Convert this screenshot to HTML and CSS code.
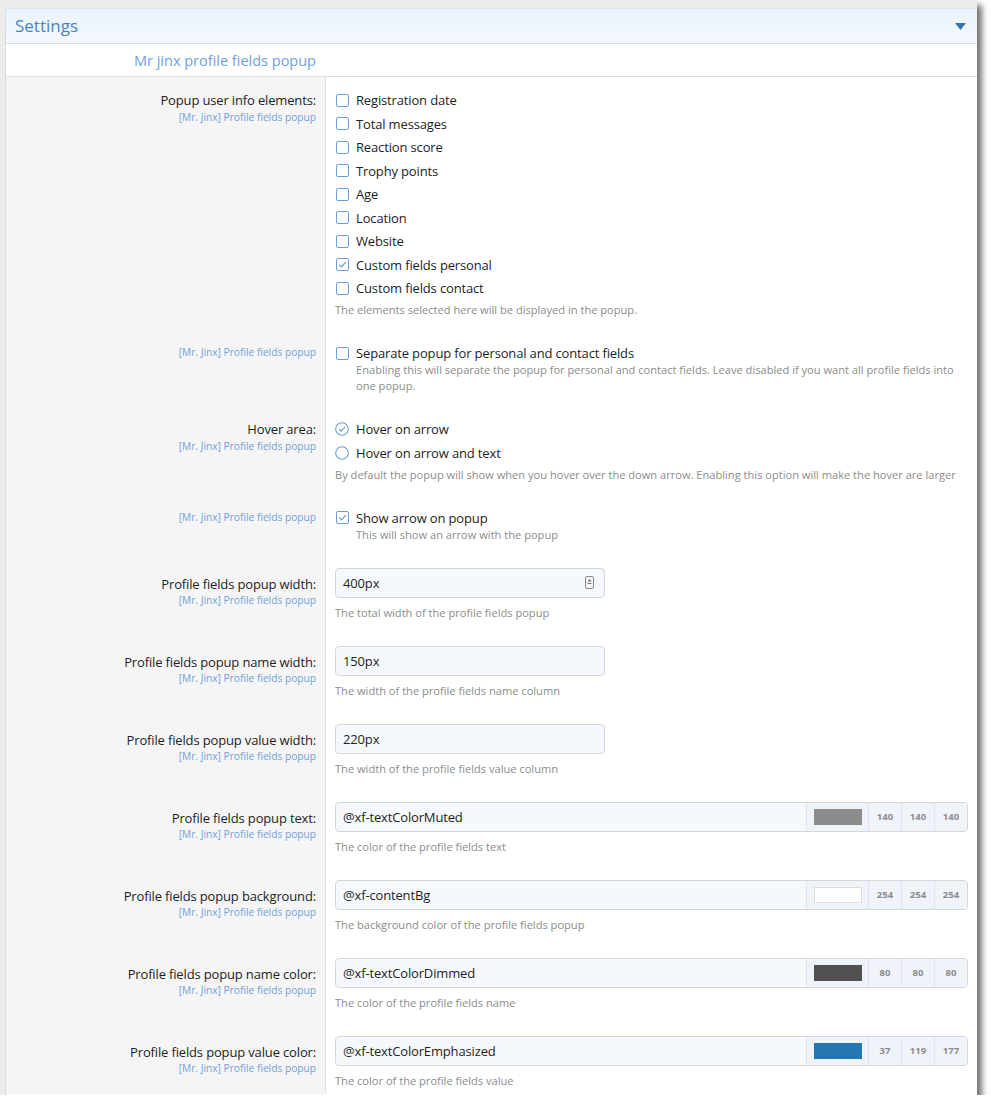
FILE: index.html
```html
<!DOCTYPE html>
<html>
<head>
<meta charset="utf-8">
<link rel="stylesheet" href="styles.css">
</head>
<body>
<div class="shot">
  <div class="panel">
    <div class="header">
      <span class="title">Settings</span>
      <svg class="caret" width="11" height="7" viewBox="0 0 11 7"><path d="M0 0h11L5.5 7z" fill="#3b72aa"/></svg>
    </div>
    <div class="subheader"><div class="subtitle">Mr jinx profile fields popup</div></div>

    <div class="rows">
      <div class="row check">
        <div class="dt"><div class="label">Popup user info elements:</div><div class="hint">[Mr. Jinx] Profile fields popup</div></div>
        <div class="dd">
          <div class="choices">
            <div class="choice"><span class="box"><svg width="13" height="13"><rect x=".5" y=".5" width="12" height="12" rx="1.5" fill="#fff" stroke="#6c9ed9"/></svg></span><span class="ctext">Registration date</span></div>
            <div class="choice"><span class="box"><svg width="13" height="13"><rect x=".5" y=".5" width="12" height="12" rx="1.5" fill="#fff" stroke="#6c9ed9"/></svg></span><span class="ctext">Total messages</span></div>
            <div class="choice"><span class="box"><svg width="13" height="13"><rect x=".5" y=".5" width="12" height="12" rx="1.5" fill="#fff" stroke="#6c9ed9"/></svg></span><span class="ctext">Reaction score</span></div>
            <div class="choice"><span class="box"><svg width="13" height="13"><rect x=".5" y=".5" width="12" height="12" rx="1.5" fill="#fff" stroke="#6c9ed9"/></svg></span><span class="ctext">Trophy points</span></div>
            <div class="choice"><span class="box"><svg width="13" height="13"><rect x=".5" y=".5" width="12" height="12" rx="1.5" fill="#fff" stroke="#6c9ed9"/></svg></span><span class="ctext">Age</span></div>
            <div class="choice"><span class="box"><svg width="13" height="13"><rect x=".5" y=".5" width="12" height="12" rx="1.5" fill="#fff" stroke="#6c9ed9"/></svg></span><span class="ctext">Location</span></div>
            <div class="choice"><span class="box"><svg width="13" height="13"><rect x=".5" y=".5" width="12" height="12" rx="1.5" fill="#fff" stroke="#6c9ed9"/></svg></span><span class="ctext">Website</span></div>
            <div class="choice"><span class="box"><svg width="13" height="13"><rect x=".5" y=".5" width="12" height="12" rx="1.5" fill="#fff" stroke="#6c9ed9"/><path d="M3.2 6.6l2.3 2.3 4.4-4.8" fill="none" stroke="#6c9ed9" stroke-width="1.3"/></svg></span><span class="ctext">Custom fields personal</span></div>
            <div class="choice"><span class="box"><svg width="13" height="13"><rect x=".5" y=".5" width="12" height="12" rx="1.5" fill="#fff" stroke="#6c9ed9"/></svg></span><span class="ctext">Custom fields contact</span></div>
          </div>
          <div class="explain">The elements selected here will be displayed in the popup.</div>
        </div>
      </div>

      <div class="row check">
        <div class="dt"><div class="hint">[Mr. Jinx] Profile fields popup</div></div>
        <div class="dd">
          <div class="choice"><span class="box"><svg width="13" height="13"><rect x=".5" y=".5" width="12" height="12" rx="1.5" fill="#fff" stroke="#6c9ed9"/></svg></span><span class="ctext">Separate popup for personal and contact fields<span class="cexplain">Enabling this will separate the popup for personal and contact fields. Leave disabled if you want all profile fields into one popup.</span></span></div>
        </div>
      </div>

      <div class="row check">
        <div class="dt"><div class="label">Hover area:</div><div class="hint">[Mr. Jinx] Profile fields popup</div></div>
        <div class="dd">
          <div class="choices">
            <div class="choice"><span class="box"><svg width="14" height="14"><circle cx="7" cy="7" r="6.3" fill="#fff" stroke="#6c9ed9" stroke-width="1.1"/><path d="M4.2 7.1l2 2 3.8-4" fill="none" stroke="#6c9ed9" stroke-width="1.2"/></svg></span><span class="ctext">Hover on arrow</span></div>
            <div class="choice"><span class="box"><svg width="14" height="14"><circle cx="7" cy="7" r="6.3" fill="#fff" stroke="#6c9ed9" stroke-width="1.1"/></svg></span><span class="ctext">Hover on arrow and text</span></div>
          </div>
          <div class="explain">By default the popup will show when you hover over the down arrow. Enabling this option will make the hover are larger</div>
        </div>
      </div>

      <div class="row check">
        <div class="dt"><div class="hint">[Mr. Jinx] Profile fields popup</div></div>
        <div class="dd">
          <div class="choice"><span class="box"><svg width="13" height="13"><rect x=".5" y=".5" width="12" height="12" rx="1.5" fill="#fff" stroke="#6c9ed9"/><path d="M3.2 6.6l2.3 2.3 4.4-4.8" fill="none" stroke="#6c9ed9" stroke-width="1.3"/></svg></span><span class="ctext">Show arrow on popup<span class="cexplain">This will show an arrow with the popup</span></span></div>
        </div>
      </div>

      <div class="row input">
        <div class="dt"><div class="label">Profile fields popup width:</div><div class="hint">[Mr. Jinx] Profile fields popup</div></div>
        <div class="dd">
          <div class="field short"><span class="val">400px</span><svg class="spin" width="9" height="13" viewBox="0 0 9 13"><rect x=".5" y=".5" width="8" height="12" rx="1.5" fill="#f4f4f4" stroke="#8a8a8a"/><path d="M4.5 3L6.5 5.6H2.5z" fill="#777"/><path d="M2.5 7.5h4" stroke="#777" stroke-width="1"/></svg></div>
          <div class="explain">The total width of the profile fields popup</div>
        </div>
      </div>

      <div class="row input">
        <div class="dt"><div class="label">Profile fields popup name width:</div><div class="hint">[Mr. Jinx] Profile fields popup</div></div>
        <div class="dd">
          <div class="field short"><span class="val">150px</span></div>
          <div class="explain">The width of the profile fields name column</div>
        </div>
      </div>

      <div class="row input">
        <div class="dt"><div class="label">Profile fields popup value width:</div><div class="hint">[Mr. Jinx] Profile fields popup</div></div>
        <div class="dd">
          <div class="field short"><span class="val">220px</span></div>
          <div class="explain">The width of the profile fields value column</div>
        </div>
      </div>

      <div class="row input">
        <div class="dt"><div class="label">Profile fields popup text:</div><div class="hint">[Mr. Jinx] Profile fields popup</div></div>
        <div class="dd">
          <div class="field color"><span class="val">@xf-textColorMuted</span><span class="swatchbox"><span class="swatch c-muted"></span></span><span class="rgb">140</span><span class="rgb">140</span><span class="rgb">140</span></div>
          <div class="explain">The color of the profile fields text</div>
        </div>
      </div>

      <div class="row input">
        <div class="dt"><div class="label">Profile fields popup background:</div><div class="hint">[Mr. Jinx] Profile fields popup</div></div>
        <div class="dd">
          <div class="field color"><span class="val">@xf-contentBg</span><span class="swatchbox"><span class="swatch c-bg"></span></span><span class="rgb">254</span><span class="rgb">254</span><span class="rgb">254</span></div>
          <div class="explain">The background color of the profile fields popup</div>
        </div>
      </div>

      <div class="row input">
        <div class="dt"><div class="label">Profile fields popup name color:</div><div class="hint">[Mr. Jinx] Profile fields popup</div></div>
        <div class="dd">
          <div class="field color"><span class="val">@xf-textColorDimmed</span><span class="swatchbox"><span class="swatch c-dim"></span></span><span class="rgb">80</span><span class="rgb">80</span><span class="rgb">80</span></div>
          <div class="explain">The color of the profile fields name</div>
        </div>
      </div>

      <div class="row input last">
        <div class="dt"><div class="label">Profile fields popup value color:</div><div class="hint">[Mr. Jinx] Profile fields popup</div></div>
        <div class="dd">
          <div class="field color"><span class="val">@xf-textColorEmphasized</span><span class="swatchbox"><span class="swatch c-emph"></span></span><span class="rgb">37</span><span class="rgb">119</span><span class="rgb">177</span></div>
          <div class="explain">The color of the profile fields value</div>
        </div>
      </div>
    </div>
  </div>
</div>
</body>
</html>
```
FILE: styles.css
```css
body {
  margin: 0;
  background: #fff;
  font-family: "Open Sans", "Noto Sans", sans-serif;
  color: #1e1e1e;
}
.shot {
  width: 977px;
  height: 1095px;
  box-sizing: border-box;
  background: #ececec;
  padding: 8px 0 0 5px;
  box-shadow: 5px 5px 6px rgba(0, 0, 0, 0.55);
  overflow: hidden;
}
.panel {
  height: 100%;
  background: #fff;
  border-left: 1px solid #dcdcdc;
  border-top: 1px solid #dde6f0;
  overflow: hidden;
}
.header {
  height: 35px;
  box-sizing: border-box;
  background: linear-gradient(#e9f2fc, #f5f9fe);
  border-bottom: 1px solid #d3dfec;
  display: flex;
  align-items: center;
  justify-content: space-between;
  padding: 0 11px 1px 9px;
}
.title {
  font-size: 17px;
  color: #4a84bd;
}
.caret { margin-top: 1px; }
.subheader {
  height: 33px;
  box-sizing: border-box;
  border-bottom: 1px solid #e0e0e0;
  display: flex;
  align-items: center;
}
.subtitle {
  width: 310px;
  text-align: right;
  font-size: 14.5px;
  color: #6fa1dc;
}
.row {
  display: grid;
  grid-template-columns: 320px 1fr;
}
.dt {
  background: #f5f5f5;
  border-right: 1px solid #e3e3e3;
  box-sizing: border-box;
  padding: 14px 9px 13px 0;
  text-align: right;
}
.dd {
  padding: 13px 10px 12px 9px;
}
.row.input .dt { padding-top: 20px; }
.row.input .dt .hint { margin-top: -1px; }
.row.input .dd { padding-top: 13px; padding-bottom: 12px; }
.row.last .dd { padding-bottom: 5px; }
.label {
  font-size: 13px;
  letter-spacing: -0.15px;
  line-height: 18px;
}
.hint {
  font-size: 10.2px;
  line-height: 16px;
  color: #6fa1dc;
}
.choices {
  display: flex;
  flex-direction: column;
  gap: 3.5px;
}
.choice {
  display: flex;
  align-items: flex-start;
  gap: 7px;
  font-size: 13px;
  letter-spacing: -0.15px;
  line-height: 20px;
}
.box {
  height: 20px;
  width: 14px;
  display: flex;
  align-items: center;
  justify-content: center;
  flex: none;
}
.ctext { display: block; }
.cexplain {
  display: block;
  font-size: 11.1px;
  letter-spacing: 0;
  line-height: 16px;
  color: #8c8c8c;
  margin-top: -1px;
}
.explain {
  font-size: 11.1px;
  line-height: 16px;
  color: #8c8c8c;
  margin-top: 4px;
}
.row.input .explain { margin-top: 7px; }
.field {
  height: 30px;
  box-sizing: border-box;
  border: 1px solid #d6d6d6;
  border-radius: 4px;
  background: #f5f9fd;
  display: flex;
  align-items: center;
  font-size: 13px;
  letter-spacing: -0.15px;
}
.val { padding-top: 1px; }
.field.short {
  width: 270px;
  padding: 0 10px 0 7px;
  justify-content: space-between;
}
.field.color {
  width: 633px;
  padding-left: 7px;
  overflow: hidden;
}
.field.color .val { flex: 1; }
.swatchbox {
  width: 62px;
  height: 100%;
  box-sizing: border-box;
  border-left: 1px solid #dfe5ec;
  background: #eef4fa;
  display: flex;
  align-items: center;
  justify-content: center;
}
.swatch {
  width: 48px;
  height: 16px;
  box-sizing: border-box;
}
.c-muted { background: #8c8c8c; }
.c-bg { background: #fefefe; border: 1px solid #dcdcdc; }
.c-dim { background: #505050; }
.c-emph { background: #2577b1; }
.rgb {
  width: 33px;
  height: 100%;
  box-sizing: border-box;
  border-left: 1px solid #dfe5ec;
  background: #eef4fa;
  display: flex;
  align-items: center;
  justify-content: center;
  font-size: 9.5px;
  font-weight: 700;
  letter-spacing: 0;
  color: #8c8c8c;
}
```
